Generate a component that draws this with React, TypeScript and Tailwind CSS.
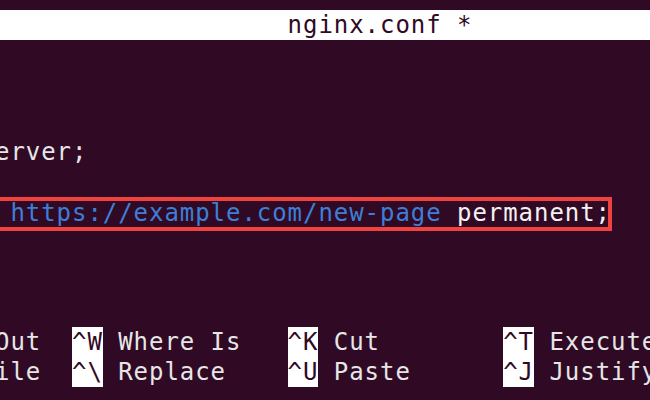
import React from "react";

const Key = ({ k }: { k: string }) => (
  <span className="inline-block h-[30px] bg-white text-[#300a24]">{k}</span>
);

export default function App() {
  return (
    <div className="w-[650px] h-[400px] overflow-hidden bg-[#300a24] font-['DejaVu_Sans_Mono',monospace] text-[24px] leading-[30px] tracking-[0.95px] text-[#e6e6e6] whitespace-pre">
      <div className="pt-[10px]">
        <div className="h-[30px] bg-white text-[#300a24]">
          <div className="ml-[-5px]">{"                   nginx.conf *"}</div>
        </div>
      </div>

      <div className="ml-[-5px] mt-[97px] h-[30px]">erver;</div>

      <div className="relative ml-[-5px] mt-[31px] h-[30px]">
        <span>{" "}</span>
        <span className="text-[#3d7fd6]">https://example.com/new-page</span>
        <span className="text-[#f2f2f2]"> permanent;</span>
        <div className="absolute left-[-10px] top-[-1px] w-[627px] h-[34px] border-4 border-[#f0423f]" />
      </div>

      <div className="ml-[-5px] mt-[99px]">
        <div className="h-[30px]">
          {"Out  "}<Key k="^W" />{" Where Is   "}<Key k="^K" />{" Cut        "}<Key k="^T" />{" Execute"}
        </div>
        <div className="h-[30px]">
          {"ile  "}<Key k="^\" />{" Replace    "}<Key k="^U" />{" Paste      "}<Key k="^J" />{" Justify"}
        </div>
      </div>
    </div>
  );
}
